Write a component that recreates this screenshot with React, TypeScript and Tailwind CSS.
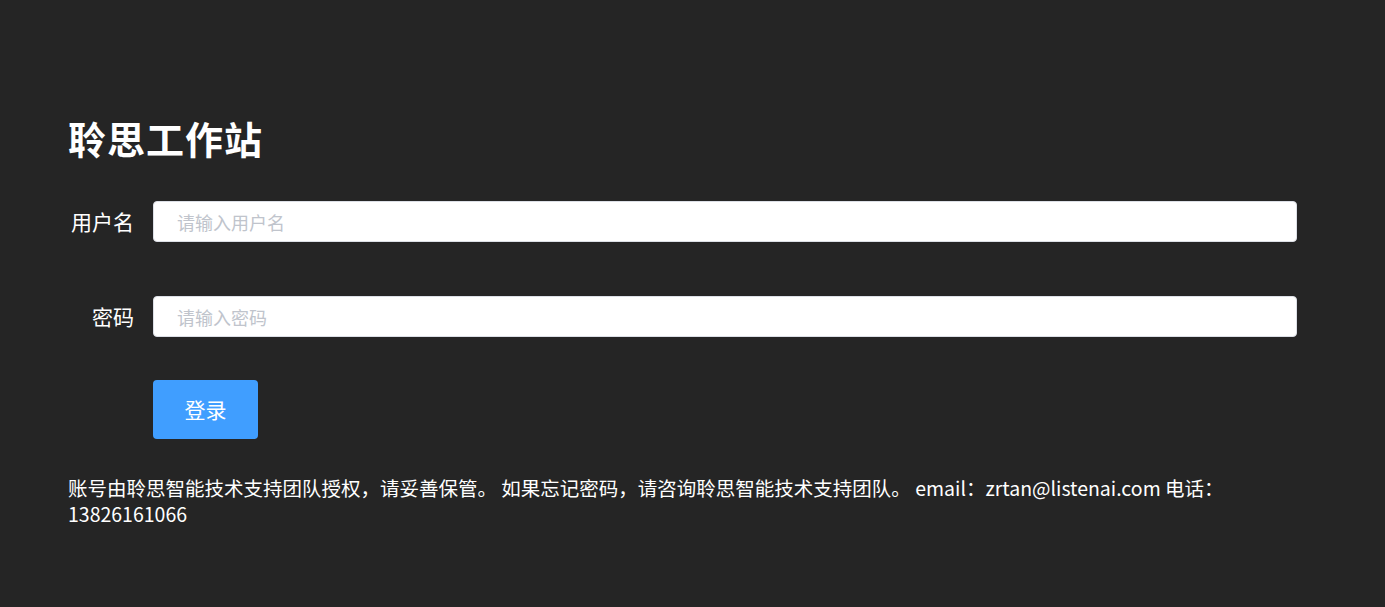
import React from "react";

export default function App() {
  const font = { fontFamily: '"Noto Sans CJK SC", "Noto Sans", sans-serif' };
  return (
    <div className="min-h-[607px] w-full bg-[#252525] text-white" style={font}>
      <div className="pl-[68px] pr-[88px] pt-[114px]">
        <h1 className="text-[38px] font-bold leading-[48px] tracking-[1px]">聆思工作站</h1>
        <div className="mt-[39px] flex flex-col">
          <div className="flex items-center">
            <label className="w-[66px] shrink-0 whitespace-nowrap text-right text-[21px] leading-[41px]">用户名</label>
            <div className="ml-[19px] flex-1">
              <input
                className="h-[41px] w-full rounded-[4px] border border-[#dcdfe6] bg-white px-[23px] text-[18px] text-[#606266] outline-none placeholder:text-[#c0c4cc]"
                placeholder="请输入用户名"
              />
            </div>
          </div>
          <div className="mt-[54px] flex items-center">
            <label className="w-[66px] shrink-0 whitespace-nowrap text-right text-[21px] leading-[41px]">密码</label>
            <div className="ml-[19px] flex-1">
              <input
                type="password"
                className="h-[41px] w-full rounded-[4px] border border-[#dcdfe6] bg-white px-[23px] text-[18px] text-[#606266] outline-none placeholder:text-[#c0c4cc]"
                placeholder="请输入密码"
              />
            </div>
          </div>
          <div className="mt-[43px] pl-[85px]">
            <button className="h-[59px] w-[105px] rounded-[4px] bg-[#409eff] text-[21px] text-white">
              登录
            </button>
          </div>
        </div>
        <p className="mt-[36px] text-[19.5px] leading-[26px]">
          账号由聆思智能技术支持团队授权，请妥善保管。 如果忘记密码，请咨询聆思智能技术支持团队。 email：zrtan@listenai.com 电话：13826161066
        </p>
      </div>
    </div>
  );
}
